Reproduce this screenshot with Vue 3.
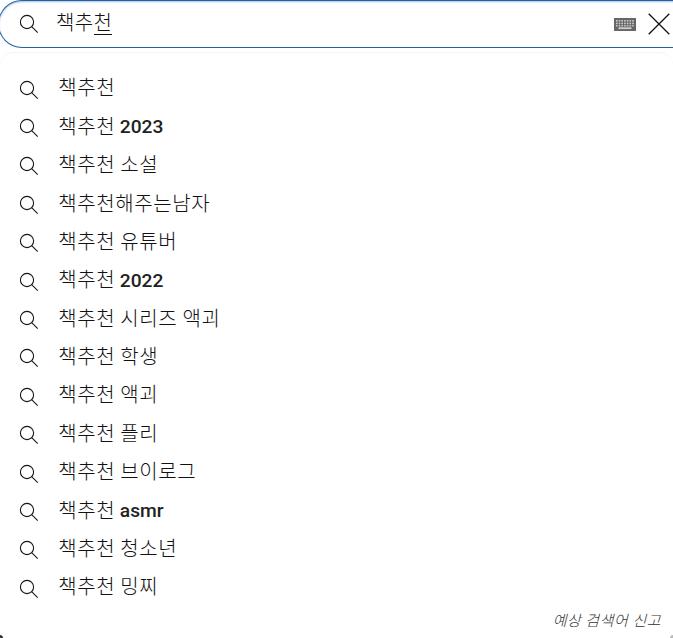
<script setup>
const suggestions = [
  { text: '책추천' },
  { text: '책추천', latin: '2023' },
  { text: '책추천 소설' },
  { text: '책추천해주는남자' },
  { text: '책추천 유튜버' },
  { text: '책추천', latin: '2022' },
  { text: '책추천 시리즈 액괴' },
  { text: '책추천 학생' },
  { text: '책추천 액괴' },
  { text: '책추천 플리' },
  { text: '책추천 브이로그' },
  { text: '책추천', latin: 'asmr' },
  { text: '책추천 청소년' },
  { text: '책추천 밍찌' },
]
const keys = [0, 1, 2, 3, 4, 5, 6]
</script>

<template>
  <main class="page">
    <header class="search">
      <svg class="lens" viewBox="0 0 20 20"><circle cx="8" cy="8" r="6.6" /><path d="M12.7 12.7 18.7 18.7" /></svg>
      <div class="query">책추<span class="composing">천</span></div>
      <svg class="keyboard" viewBox="0 0 22 13">
        <rect width="22" height="13" fill="#666" />
        <g fill="#ccc">
          <template v-for="k in keys" :key="k">
            <rect :x="2 + k * 2.7" y="2" width="1.6" height="1.6" />
            <rect :x="2 + k * 2.7" y="4.6" width="1.6" height="1.6" />
            <rect :x="2 + k * 2.7" y="7.1" width="1.6" height="1.4" />
          </template>
          <rect x="4.5" y="9.3" width="13" height="1.8" />
        </g>
      </svg>
      <svg class="close" viewBox="0 0 22 22"><path d="M.7.7 21.3 21.3M21.3.7.7 21.3" /></svg>
    </header>
    <section class="panel">
      <ul class="list">
        <li v-for="item in suggestions" :key="item.text + item.latin" class="row">
          <svg class="lens" viewBox="0 0 20 20"><circle cx="8" cy="8" r="6.6" /><path d="M12.7 12.7 18.7 18.7" /></svg>
          <span class="label">{{ item.text }}</span>
          <b v-if="item.latin" class="latin">{{ item.latin }}</b>
        </li>
      </ul>
      <a class="report">예상 검색어 신고</a>
    </section>
  </main>
</template>

<style>
body { background: #fff; overflow: hidden; }
</style>

<style scoped>
.page {
  box-sizing: border-box;
  height: 638px;
  overflow: hidden;
  display: flex;
  flex-direction: column;
  gap: 4px;
  background: radial-gradient(circle at 0 638px, #333 2.5px, transparent 3.5px), radial-gradient(circle at 673px 638px, #bbb 2.5px, transparent 3.5px);
  font-family: Roboto, "Noto Sans CJK KR", sans-serif;
  color: #111;
}
.search {
  box-sizing: border-box;
  flex: none;
  height: 48px;
  display: flex;
  align-items: center;
  margin: 0 -4px 0 -2px;
  padding: 0 7.5px 0 20px;
  border: 1px solid #2461a0;
  border-right: 0;
  border-radius: 24px 0 0 24px;
  box-shadow: inset 0 1px 2px #a9bfe6;
}
.lens {
  flex: none;
  width: 20px;
  height: 20px;
  fill: none;
  stroke: #151515;
  stroke-width: 1.1;
}
.query {
  flex: 1;
  margin-left: 17px;
  font-size: 20px;
  font-weight: 300;
  line-height: 26px;
  letter-spacing: 0.4px;
  padding-bottom: 3px;
}
.composing {
  display: inline-block;
  height: 24px;
  border-bottom: 1px solid #111;
}
.keyboard { width: 22px; height: 13px; margin: 1px 11.5px 0 0; }
.close { width: 22px; height: 22px; fill: none; stroke: #111; stroke-width: 1.3; margin-bottom: 1px; }
.panel {
  box-sizing: border-box;
  height: 586px;
  display: flex;
  flex-direction: column;
  border-top: 1px solid #f3f3f3;
  border-radius: 14px 14px 4px 4px;
  padding-top: 17px;
}
.list { margin: 0; padding: 0; list-style: none; }
.row {
  height: 38.4px;
  display: flex;
  align-items: center;
  padding-left: 19px;
}
.row .lens { margin-top: 1px; }
.label {
  margin-left: 19.3px;
  padding-bottom: 1.7px;
  font-size: 20px;
  font-weight: 300;
  letter-spacing: 0.6px;
  word-spacing: -0.4px;
  line-height: 28px;
  white-space: pre;
}
.latin {
  margin-left: 4.5px;
  padding-bottom: 0.3px;
  font-size: 19.2px;
  font-weight: 500;
  line-height: 28px;
  color: #212121;
}
.report {
  align-self: flex-end;
  margin: 4px 12px 0 0;
  font-size: 15px;
  font-weight: 300;
  font-style: italic;
  letter-spacing: 0.5px;
  line-height: 21px;
  color: #333;
}
</style>
